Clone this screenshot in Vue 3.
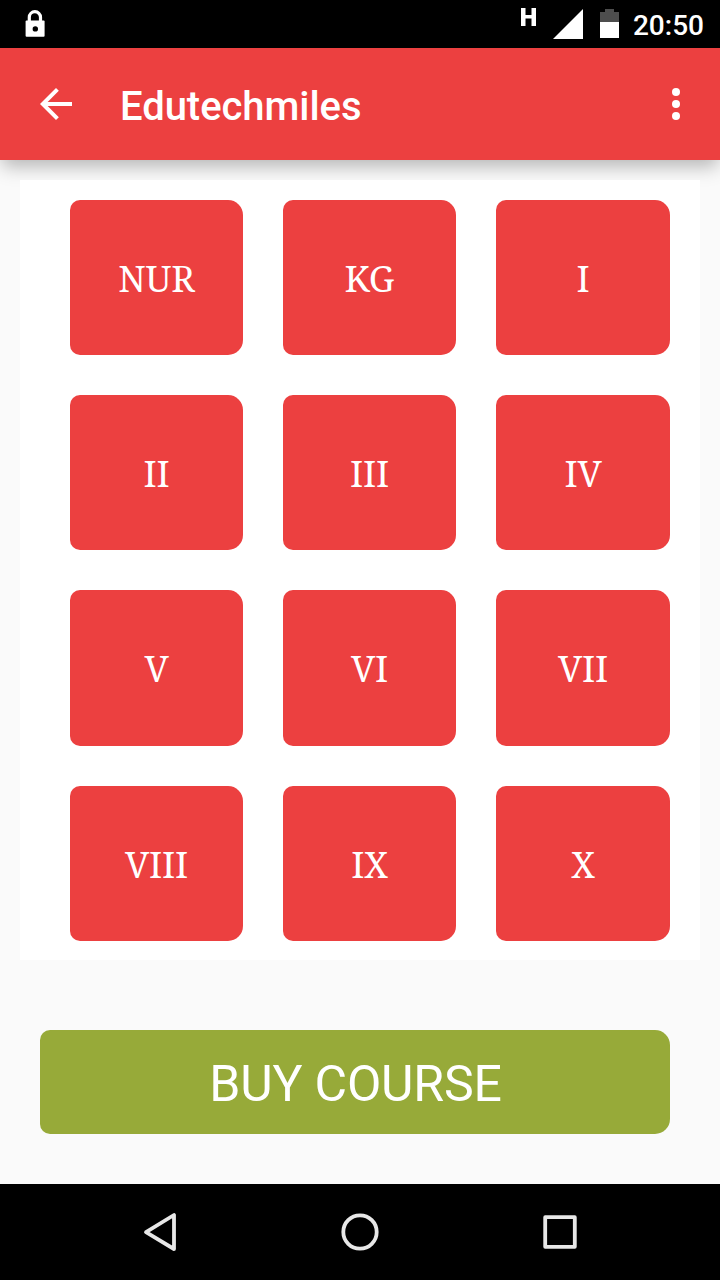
<script setup>
const title = 'Edutechmiles'
const time = '20:50'

const classes = ['NUR', 'KG', 'I', 'II', 'III', 'IV', 'V', 'VI', 'VII', 'VIII', 'IX', 'X']
</script>

<template>
  <div class="screen">
    <div class="status-bar">
      <svg class="lock" width="20" height="28" viewBox="0 0 20 28">
        <path d="M4.3 12V7.3a5.6 5.6 0 0 1 11.2 0V12" fill="none" stroke="#fff" stroke-width="3.2" />
        <rect x="0.6" y="10.6" width="19" height="16.2" rx="1" fill="#fff" />
        <circle cx="10.3" cy="18.9" r="2.7" fill="#000" />
      </svg>
      <div class="status-icons">
        <svg class="network" width="15" height="18" viewBox="0 0 15 18">
          <path d="M0 0h4.500v7h6V0H15v18h-4.500v-7.500h-6V18H0z" fill="#fff" />
        </svg>
        <svg class="signal" width="30" height="30" viewBox="0 0 30 30">
          <path d="M30 0v30H0z" fill="#fff" />
        </svg>
        <svg class="battery" width="19" height="29" viewBox="0 0 19 29">
          <path d="M5 0h9v3h5v10H0V3h5z" fill="#4d4d4d" />
          <rect y="13" width="19" height="16" fill="#fff" />
        </svg>
        <span class="time">{{ time }}</span>
      </div>
    </div>

    <header class="toolbar">
      <svg class="back" width="32" height="32" viewBox="0 0 32 32">
        <path d="M32 14H7.66L18.84 2.82 16 0 0 16l16 16 2.82-2.82L7.66 18H32z" fill="#fff" />
      </svg>
      <h1>{{ title }}</h1>
      <svg class="more" width="8" height="32" viewBox="0 0 8 32">
        <circle cx="4" cy="4" r="4" fill="#fff" />
        <circle cx="4" cy="16" r="4" fill="#fff" />
        <circle cx="4" cy="28" r="4" fill="#fff" />
      </svg>
    </header>

    <main class="content">
      <div class="class-grid">
        <button v-for="name in classes" :key="name" class="class-tile">{{ name }}</button>
      </div>
      <button class="buy">BUY COURSE</button>
    </main>

    <nav class="nav-bar">
      <svg width="40" height="40" viewBox="0 0 40 40">
        <path d="M34 3v34L6 20.2z" />
      </svg>
      <svg width="40" height="40" viewBox="0 0 40 40">
        <circle cx="20" cy="20" r="16.7" />
      </svg>
      <svg width="40" height="40" viewBox="0 0 40 40">
        <rect x="5.2" y="5.2" width="29.6" height="29.6" />
      </svg>
    </nav>
  </div>
</template>

<style>
body {
  margin: 0;
}
</style>

<style scoped>
.screen {
  display: flex;
  flex-direction: column;
  width: 720px;
  height: 1280px;
  overflow: hidden;
  background: #fafafa;
  font-family: Roboto, sans-serif;
}
svg {
  display: block;
  flex: none;
}
button {
  border: none;
  padding: 0;
  color: #fff;
}
.status-bar {
  display: flex;
  flex: none;
  justify-content: space-between;
  box-sizing: border-box;
  height: 48px;
  padding: 0 16px 0 25px;
  background: #000;
}
.lock {
  margin-top: 10px;
}
.status-icons {
  display: flex;
  align-items: flex-start;
}
.network {
  margin: 8px 17px 0 0;
}
.signal {
  margin: 9px 17px 0 0;
}
.battery {
  margin: 9px 14px 0 0;
}
.time {
  margin-top: 10px;
  color: #fff;
  font-size: 28px;
  font-weight: 500;
  line-height: 32px;
}
.toolbar {
  display: flex;
  flex: none;
  align-items: center;
  box-sizing: border-box;
  height: 112px;
  padding: 0 40px;
  background: #ec4040;
  box-shadow: 0 8px 18px -2px rgba(0, 0, 0, 0.29);
}
.toolbar h1 {
  flex: 1;
  margin: 6px 0 0 48px;
  color: #fff;
  font-size: 40px;
  font-weight: 500;
  letter-spacing: -0.05px;
  line-height: 48px;
}
.content {
  position: relative;
  display: flex;
  flex: 1;
  flex-direction: column;
  padding: 20px 20px 0;
}
.class-grid {
  display: grid;
  grid-template-columns: 173px 173px 174px;
  grid-template-rows: 155px 155px 156px 155px;
  gap: 40px;
  box-sizing: border-box;
  height: 780px;
  padding: 20px 30px 19px 50px;
  background: #fff;
}
.class-tile {
  padding-top: 2px;
  border-radius: 10px 15px 15px 10px;
  background: #ec4040;
  font-family: 'Noto Serif', 'DejaVu Serif', serif;
  font-size: 36px;
  letter-spacing: -0.2px;
}
/* the third row is a pixel taller, its labels stay on the same offset */
.class-tile:nth-child(n + 7):nth-child(-n + 9) {
  padding: 1px 0 0;
}
.buy {
  height: 104px;
  margin: 70px 30px 0 20px;
  padding: 4px 0 0 1px;
  border-radius: 10px 15px 15px 10px;
  background: #97aa39;
  font-family: Roboto, sans-serif;
  font-size: 50px;
  letter-spacing: -0.2px;
}
.nav-bar {
  display: flex;
  flex: none;
  align-items: center;
  justify-content: space-between;
  box-sizing: border-box;
  height: 96px;
  padding: 0 140px;
  background: #000;
}
.nav-bar svg {
  fill: none;
  stroke: #e8e8e8;
  stroke-width: 3.8;
  stroke-linejoin: round;
}
</style>
